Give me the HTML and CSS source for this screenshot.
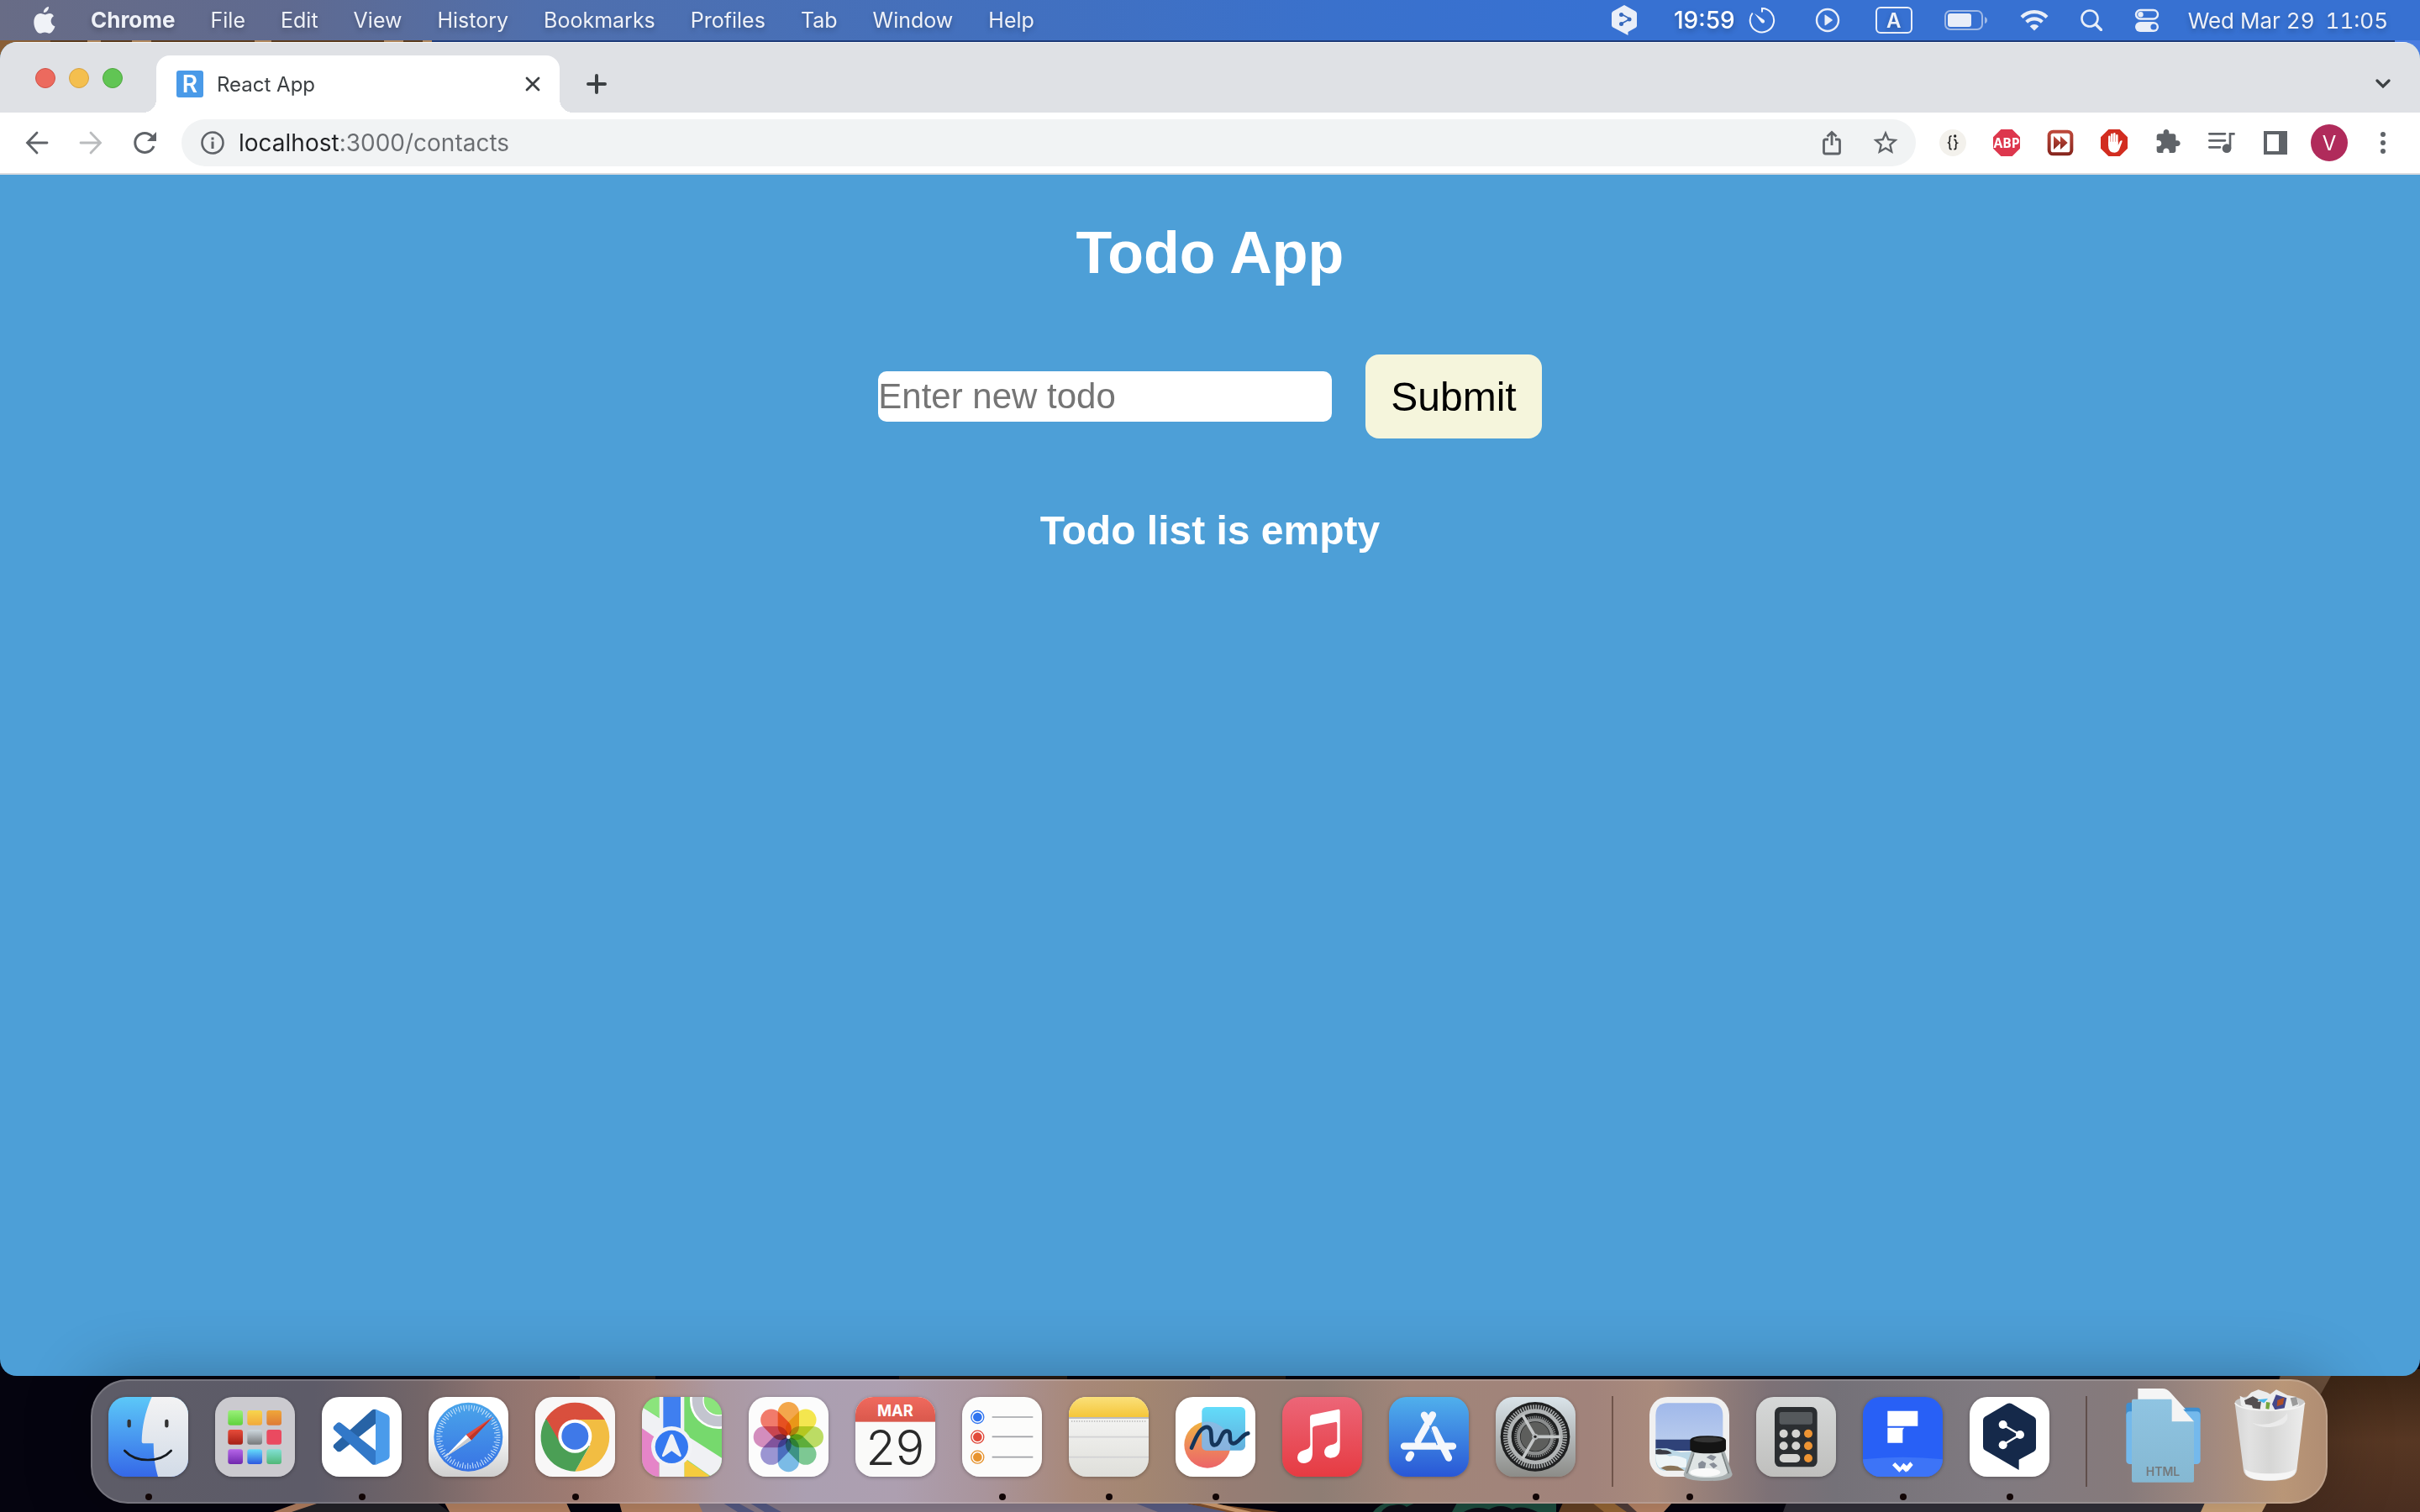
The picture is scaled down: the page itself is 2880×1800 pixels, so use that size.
FILE: index.html
```html
<!DOCTYPE html>
<html lang="en">
<head>
<meta charset="utf-8">
<meta name="viewport" content="width=device-width, initial-scale=1">
<title>React App</title>
<link rel="stylesheet" href="styles.css">
</head>
<body>
<svg class="wallpaper" viewBox="0 0 2880 1800" preserveAspectRatio="none" aria-hidden="true">
  <defs>
    <linearGradient id="wall-brown" x1="0" y1="0" x2="0" y2="1"><stop offset="0" stop-color="#3a2414"/><stop offset=".5" stop-color="#573723"/><stop offset="1" stop-color="#4a2e20"/></linearGradient>
  </defs>
  <rect width="2880" height="1800" fill="#05040f"/>
  <rect width="514" height="100" fill="#5a3a1c"/>
  <rect width="60" height="100" fill="#8a5f36"/>
  <path d="M104 48h16v3h-16zM157 48h23v3h-23zM303 48h20v3h-20zM457 48h23v3h-23zM503 48h11v3h-11z" fill="#b0875c"/>
  <rect x="514" width="2340" height="100" fill="#1d3a78"/>
  <rect x="2850" width="30" height="100" fill="#4a7ce0"/>
  <path d="M690 1638h90v5h-90zM1070 1638h200v5h-200zM1440 1638h90v5h-90z" fill="#2a1b12"/>
  <path d="M380 1789H520L535 1800H325z" fill="#25242a"/>
  <path d="M355 1789h25l-33 11h-22z" fill="#bd8666"/>
  <path d="M529 1789H836V1800H535z" fill="#c08a68"/>
  <path d="M674 1789h63l3 11h-61z" fill="#05040f"/>
  <path d="M831 1789h560v11H836z" fill="#8f8191"/>
  <path d="M860 1789h18l20 11h-20zM892 1789h18l20 11h-20z" fill="#5a5f8c"/>
  <path d="M1350 1789h58l60 11h-90z" fill="#5f638c"/>
  <path d="M1408 1789h24l90 11h-62z" fill="#8a5630"/>
  <path d="M1424 1789h20l46 11h-20z" fill="#e0a878"/>
  <path d="M1634 1800q8-10 18-11h200v11z" fill="#1f5243"/>
  <path d="M1644 1800q6-8 14-8 10-3 16 2 10-6 20-5h40l-6 11zM1742 1800q14-8 30-3 14-8 28 0 10-6 30 3z" fill="#0d0d17"/>
  <path d="M1860 1789h50l20 11h-75z" fill="#6b4526"/>
  <path d="M1895 1789h50l12 11h-48z" fill="#a06d38"/>
  <path d="M1920 1789h30l10 11h-24z" fill="#55403c"/>
  <path d="M1936 1789h54l-10 11h-32z" fill="#c38c6c"/>
  <path d="M2126 1789h500v11H2122z" fill="#34323c"/>
  <path d="M2714 1630H2880V1800H2690z" fill="url(#wall-brown)"/>
  <path d="M2714 1638h60l-50 90h-40z" fill="#6b503c"/>
  <path d="M2624 1789h74l-6 11h-73z" fill="#d9ae80"/>
</svg>

<header class="menubar">
  <nav class="menus" aria-label="Menu bar">
    <button class="menu" type="button" aria-label="Apple menu"><svg class="apple" viewBox="0 0 26 32"><path d="M18 0c.3 3.600-2.800 7.200-6.100 7C11.500 3.700 14.700.4 18 0zM23.900 11.300c-5 3.200-4 10.100 1.600 12.300-1.700 4.500-4.300 8.200-6.800 8.200-2.100 0-2.900-1.200-5.400-1.200s-3.300 1.200-5.200 1.200C3.800 31.800.3 24.700.3 18.400c0-6.300 3.700-10.300 7.900-10.300 2.300 0 3.800 1.300 5.300 1.300 1.400 0 3.100-1.400 5.800-1.400 1.900 0 3.600 1 4.600 3.300z"/></svg></button>
    <button class="menu menu-app" type="button">Chrome</button>
    <button class="menu" type="button">File</button>
    <button class="menu" type="button">Edit</button>
    <button class="menu" type="button">View</button>
    <button class="menu" type="button">History</button>
    <button class="menu" type="button">Bookmarks</button>
    <button class="menu" type="button">Profiles</button>
    <button class="menu" type="button">Tab</button>
    <button class="menu" type="button">Window</button>
    <button class="menu" type="button">Help</button>
  </nav>
  <div class="status">
    <svg viewBox="0 0 30 36" width="30" height="36"><path d="M15 0l13.500 7.500q1.500 1 1.500 2.500v14.500q0 1.500-1.500 2.500L19.500 32v4L1.500 26.500Q0 25.500 0 24V10q0-1.500 1.500-2.500z" fill="#e9eef8"/><path d="M12 11l10 5.500L12 22" fill="none" stroke="#3568bd" stroke-width="1.500"/><g fill="#3568bd"><circle cx="11.500" cy="11.500" r="2.500"/><circle cx="21" cy="17" r="2.500"/><circle cx="11.500" cy="22.500" r="2.500"/></g></svg>
    <span class="timer"><span class="timer-text">19:59</span>
      <svg viewBox="0 0 32 32" width="32" height="32"><path d="M16 6.500V2a14.200 14.200 0 1 1-11.300 5.500" fill="none" stroke="#f2f5fc" stroke-width="2"/><path d="M7 8l11 7.500a2.200 2.200 0 1 1-3 3z" fill="#f2f5fc"/></svg></span>
    <svg class="playback" viewBox="0 0 30 30" width="30" height="30"><circle cx="15" cy="15" r="13" fill="none" stroke="#e9eef8" stroke-width="2.400"/><path d="M11.500 9.200q0-1 1-.500l8 5.500q.8.700 0 1.400l-8 5.600q-1 .5-1-.5z" fill="#e9eef8"/></svg>
    <span class="keyboard-layout">A</span>
    <svg viewBox="0 0 52 24" width="52" height="24"><rect x="1" y="1" width="44" height="22" rx="6" fill="none" stroke="#9fb9e6" stroke-width="2"/><rect x="4" y="4" width="28" height="16" rx="3" fill="#e9eef8"/><path d="M48 8q3 1 3 4t-3 4z" fill="#9fb9e6"/></svg>
    <svg viewBox="0 0 34 26" width="34" height="26"><path d="M2 9.500a21 21 0 0 1 30 0M7.700 15.200a13 13 0 0 1 18.600 0" fill="none" stroke="#e9eef8" stroke-width="4.200"/><path d="M17 25.500l-5.300-5.300a7.500 7.500 0 0 1 10.600 0z" fill="#e9eef8"/></svg>
    <svg viewBox="0 0 26 26" width="26" height="26"><circle cx="11" cy="11" r="9.500" fill="none" stroke="#e9eef8" stroke-width="2.600"/><path d="M18 18l6.500 6.500" stroke="#e9eef8" stroke-width="3.400" stroke-linecap="round"/></svg>
    <svg viewBox="0 0 30 28" width="30" height="28"><rect x="2" y="2" width="26" height="10.500" rx="5.250" fill="none" stroke="#e9eef8" stroke-width="2.400"/><circle cx="7.500" cy="7.200" r="3.200" fill="#e9eef8"/><rect x="1" y="16" width="28" height="12" rx="6" fill="#e9eef8"/><circle cx="23" cy="22" r="3.600" fill="#3771d2"/></svg>
    <span class="clock"><span>Wed Mar 29</span><span>11:05</span></span>
  </div>
</header>

<main class="window">
  <div class="tabstrip">
    <div class="lights">
      <button class="light light-close" type="button" aria-label="Close window"></button>
      <button class="light light-minimize" type="button" aria-label="Minimize window"></button>
      <button class="light light-zoom" type="button" aria-label="Zoom window"></button>
    </div>
    <div class="tab">
      <span class="favicon">R</span>
      <span class="tab-title">React App</span>
      <button class="plain" type="button" aria-label="Close tab"><svg viewBox="0 0 18 18" width="18" height="18"><path d="M2 2l14 14M16 2L2 16" stroke="#3c4043" stroke-width="2.800" stroke-linecap="round"/></svg></button>
    </div>
    <button class="plain new-tab" type="button" aria-label="New tab"><svg viewBox="0 0 24 24" width="24" height="24"><path d="M12 2v20M2 12h20" stroke="#3c4043" stroke-width="4" stroke-linecap="round"/></svg></button>
    <button class="plain tab-search" type="button" aria-label="Search tabs"><svg viewBox="0 0 18 12" width="18" height="12"><path d="M2 2l7 7 7-7" fill="none" stroke="#3c4043" stroke-width="3.200" stroke-linecap="round"/></svg></button>
  </div>

  <div class="toolbar">
    <button class="plain" type="button" aria-label="Back"><svg viewBox="0 0 32 32" width="32" height="32"><path d="M28 16H5M16 4L4.500 16 16 28" fill="none" stroke="#5f6368" stroke-width="2.800" stroke-linecap="round"/></svg></button>
    <button class="plain" type="button" aria-label="Forward"><svg viewBox="0 0 32 32" width="32" height="32"><path d="M4 16h23M16 4l11.500 12L16 28" fill="none" stroke="#babcbe" stroke-width="2.800" stroke-linecap="round"/></svg></button>
    <button class="plain" type="button" aria-label="Reload"><svg viewBox="0 0 32 32" width="32" height="32"><path d="M27 20a11.500 11.500 0 1 1-2-11.500" fill="none" stroke="#5f6368" stroke-width="3"/><path d="M30 3v11H19z" fill="#5f6368"/></svg></button>
    <div class="omnibox">
      <svg viewBox="0 0 28 28" width="28" height="28"><circle cx="14" cy="14" r="12.500" fill="none" stroke="#5f6368" stroke-width="2.600"/><path d="M12.500 12.500h3V21h-3zM12.500 7.500h3v3h-3z" fill="#5f6368"/></svg>
      <input class="url" type="text" value="localhost:3000/contacts" aria-label="Address">
      <button class="plain" type="button" aria-label="Share"><svg viewBox="0 0 32 32" width="32" height="32"><path d="M12 12H8.500Q6.500 12 6.500 14v13q0 2 2 2h15q2 0 2-2V14q0-2-2-2H20M16 19V4M10.500 8.500L16 3.500l5.500 5" fill="none" stroke="#5f6368" stroke-width="2.800"/></svg></button>
      <button class="plain" type="button" aria-label="Bookmark this tab"><svg viewBox="1 1 22 22" width="32" height="32"><path fill="#5f6368" d="M22 9.240l-7.190-.62L12 2 9.190 8.630 2 9.240l5.460 4.730L5.820 21 12 17.270 18.180 21l-1.630-7.030L22 9.240zM12 15.400l-3.760 2.270 1-4.280-3.320-2.880 4.380-.38L12 6.100l1.710 4.040 4.380.38-3.320 2.880 1 4.280L12 15.400z"/></svg></button>
    </div>
    <button class="plain" type="button" aria-label="JSON formatter"><svg viewBox="0 0 96 96" width="32" height="32"><circle cx="48" cy="48" r="48" fill="#f3f1ec"/><path d="M44 24h-2q-5 0-5 5v11q0 6-4 8 4 2 4 8v10q0 5 5 5h2" fill="none" stroke="#222" stroke-width="5"/><circle cx="56" cy="24" r="5" fill="#222"/><path d="M52 37h2q5 0 5 5v2q0 4 4 5-4 2-4 6v11q0 5-5 5h-2" fill="none" stroke="#222" stroke-width="5"/></svg></button>
    <button class="plain" type="button" aria-label="Adblock Plus"><svg viewBox="0 0 96 96" width="32" height="32"><path d="M28 0h40l28 28v40L68 96H28L0 68V28z" fill="#dd374d"/><text class="abp" x="48" y="65" text-anchor="middle">ABP</text></svg></button>
    <button class="plain" type="button" aria-label="Video speed"><svg viewBox="0 0 96 96" width="32" height="32"><defs><linearGradient id="speed" x2="0" y2="1"><stop stop-color="#c04a3c"/><stop offset="1" stop-color="#84241c"/></linearGradient></defs><rect x="2" y="2" width="92" height="92" rx="20" fill="url(#speed)"/><rect x="14" y="14" width="68" height="68" rx="8" fill="#fff"/><path d="M24 24l26 24-26 24zM48 24l26 24-26 24z" fill="url(#speed)"/></svg></button>
    <button class="plain" type="button" aria-label="AdBlock"><svg viewBox="0 0 96 96" width="32" height="32"><path d="M28 0h40l28 28v40L68 96H28L0 68V28z" fill="#d22d20"/><path d="M31 26v30M40 18v34M49 16v34M58 22v32" stroke="#fff" stroke-width="7.500" stroke-linecap="round"/><path d="M27 44h35v14l6-14q3-6 8-4 2 2 0 6l-9 24q-5 13-17 13-23 0-23-27z" fill="#fff"/></svg></button>
    <button class="plain" type="button" aria-label="Extensions"><svg viewBox="0 1 24 24" width="32" height="32"><path fill="#5f6368" d="M20.500 11H19V7c0-1.100-.9-2-2-2h-4V3.500C13 2.120 11.880 1 10.500 1S8 2.120 8 3.500V5H4c-1.100 0-1.990.9-1.990 2v3.800H3.500c1.490 0 2.700 1.210 2.700 2.700s-1.210 2.700-2.700 2.700H2V20c0 1.100.9 2 2 2h3.800v-1.500c0-1.490 1.210-2.700 2.700-2.700 1.490 0 2.700 1.210 2.700 2.700V22H17c1.100 0 2-.9 2-2v-4h1.500c1.380 0 2.500-1.120 2.500-2.500S21.880 11 20.500 11z"/></svg></button>
    <button class="plain" type="button" aria-label="Media control"><svg viewBox="0 0 96 96" width="32" height="32"><path d="M4 16h56M4 40h56M4 64h38" stroke="#5f6368" stroke-width="8" stroke-linecap="round"/><circle cx="66" cy="68" r="16" fill="#5f6368"/><path d="M74 68V12H95v8H82v48z" fill="#5f6368"/></svg></button>
    <button class="plain" type="button" aria-label="Side panel"><svg viewBox="0 0 32 32" width="32" height="32"><path d="M2 2h28v28H2zM6 6v20h14V6z" fill="#5f6368" fill-rule="evenodd"/></svg></button>
    <button class="plain avatar" type="button">V</button>
    <button class="plain" type="button" aria-label="Chrome menu"><svg viewBox="0 0 32 32" width="32" height="32"><g fill="#5f6368"><circle cx="16" cy="6" r="3"/><circle cx="16" cy="16" r="3"/><circle cx="16" cy="26" r="3"/></g></svg></button>
  </div>

  <section class="page">
    <h1 class="title">Todo App</h1>
    <form class="todo-form">
      <input class="todo-input" type="text" placeholder="Enter new todo" aria-label="New todo">
      <button class="todo-submit" type="button">Submit</button>
    </form>
    <h2 class="empty">Todo list is empty</h2>
  </section>
</main>

<footer class="dock-area">
<ul class="dock">
  <li class="app running"><svg class="icon" viewBox="390 160 285 285"><defs><linearGradient id="f1" x2="0" y2="1"><stop stop-color="#5cc8f8"/><stop offset="1" stop-color="#3568e8"/></linearGradient><linearGradient id="f2" x2="0" y2="1"><stop stop-color="#f3f3f4"/><stop offset="1" stop-color="#d2dbe7"/></linearGradient></defs><rect x="390" y="160" width="285" height="285" fill="url(#f1)"/><path d="M545 160C520 215 510 270 509 318q0 8 8 8h34c0 44 5 84 16 119h108V160z" fill="url(#f2)"/><path d="M464 247v16M598 247v16" stroke="#333" stroke-width="13" stroke-linecap="round"/><path d="M448 352c40 44 126 44 166 0" fill="none" stroke="#151a20" stroke-width="8" stroke-linecap="round"/></svg></li>
  <li class="app"><svg class="icon" viewBox="774 160 285 285"><defs><linearGradient id="l1" x2="0" y2="1"><stop stop-color="#9af07a"/><stop offset="1" stop-color="#5fd23c"/></linearGradient><linearGradient id="l2" x2="0" y2="1"><stop stop-color="#f7d54d"/><stop offset="1" stop-color="#f2a93a"/></linearGradient><linearGradient id="l3" x2="0" y2="1"><stop stop-color="#efa63a"/><stop offset="1" stop-color="#de7a35"/></linearGradient><linearGradient id="l4" x2="0" y2="1"><stop stop-color="#e74c3a"/><stop offset="1" stop-color="#a51e16"/></linearGradient><linearGradient id="l5" x2="0" y2="1"><stop stop-color="#ced8de"/><stop offset="1" stop-color="#76787a"/></linearGradient><linearGradient id="l7" x2="0" y2="1"><stop stop-color="#b565e8"/><stop offset="1" stop-color="#7028ad"/></linearGradient><linearGradient id="l8" x2="0" y2="1"><stop stop-color="#64dcfa"/><stop offset="1" stop-color="#2c58e0"/></linearGradient><linearGradient id="l9" x2="0" y2="1"><stop stop-color="#82e0d4"/><stop offset="1" stop-color="#50b878"/></linearGradient></defs><rect x="774" y="160" width="285" height="285" fill="#cbcacf"/><rect x="820" y="208" width="53" height="53" rx="9" fill="url(#l1)"/><rect x="889" y="208" width="53" height="53" rx="9" fill="url(#l2)"/><rect x="958" y="208" width="53" height="53" rx="9" fill="url(#l3)"/><rect x="820" y="277" width="53" height="53" rx="9" fill="url(#l4)"/><rect x="889" y="277" width="53" height="53" rx="9" fill="url(#l5)"/><rect x="958" y="277" width="53" height="53" rx="9" fill="#ea4a60"/><rect x="820" y="347" width="53" height="53" rx="9" fill="url(#l7)"/><rect x="889" y="347" width="53" height="53" rx="9" fill="url(#l8)"/><rect x="958" y="347" width="53" height="53" rx="9" fill="url(#l9)"/></svg></li>
  <li class="app running"><svg class="icon" viewBox="1150 160 285 285"><rect x="1150" y="160" width="285" height="285" fill="#fff"/><path d="M1193 330q-5 8 2 14l10 10q6 4 13 0l124-98v-50q-6-4-14 2z" fill="#2763a6"/><path d="M1193 277q-5-8 2-14l10-10q6-4 13 0l124 98v50q-6 4-14-2z" fill="#3278c8"/><path d="M1340 203l44 20q8 4 8 12v137q0 8-8 12l-44 20q4-4 2-12V215q2-8-2-12z" fill="#4a9bea"/></svg></li>
  <li class="app"><svg class="icon" viewBox="65 160 285 285"><defs><linearGradient id="s1" x2="0" y2="1"><stop offset=".4" stop-color="#fff"/><stop offset="1" stop-color="#cfcfcf"/></linearGradient><linearGradient id="s2" x2="0" y2="1"><stop stop-color="#4aa5ea"/><stop offset="1" stop-color="#3873e4"/></linearGradient></defs><rect x="65" y="160" width="285" height="285" fill="url(#s1)"/><circle cx="207" cy="303" r="123" fill="url(#s2)"/><circle cx="207" cy="303" r="107" fill="none" stroke="#cfe6fb" stroke-width="14" stroke-dasharray="3 6.340"/><circle cx="207" cy="303" r="97" fill="none" stroke="#cfe6fb" stroke-width="8" stroke-dasharray="3 13.930"/><path d="M295 231l-78 84-18-20z" fill="#e24a3c"/><path d="M295 231l-78 84-9-10z" fill="#bb3529"/><path d="M122 376l77-81 18 20z" fill="#fff"/><path d="M122 376l86-71 9 10z" fill="#c9ccd0"/></svg></li>
  <li class="app running"><svg class="icon" viewBox="443 160 285 285"><rect x="443" y="160" width="285" height="285" fill="#f8f7f7"/><path d="M585 303L478.500 241.500A123 123 0 0 1 691.500 241.500z" fill="#d94f3d"/><path d="M691 241A123 123 0 0 1 585 426L640 330 600 241z" fill="#f2bd42"/><path d="M482 237A123 123 0 0 0 585 426L637 334 540 330z" fill="#4b9f55"/><path d="M482 237L535 330 560 255V241H691L680 230z" fill="#d94f3d"/><circle cx="585" cy="300" r="60" fill="#fff"/><circle cx="585" cy="300" r="48" fill="#3f79e8"/></svg></li>
  <li class="app"><svg class="icon" viewBox="822 160 285 285"><rect x="822" y="160" width="285" height="285" fill="#76d96d"/><path d="M822 195l62 38V160h-62z" fill="#8be47c"/><path d="M822 270l62 42v133h-62z" fill="#e585c8"/><path d="M973 380l95 65h-95z" fill="#f5cb3e"/><path d="M822 196l285 182v67h-37L822 272z" fill="#f0f1f4"/><path d="M884 160h89v285h-89z" fill="#f0f1f4"/><path d="M898 160h62v140h-62z" fill="#3f7ff0"/><circle cx="1095" cy="172" r="77" fill="#8be47c" stroke="#fff" stroke-width="50"/><circle cx="1095" cy="172" r="75" fill="none" stroke="#c3c5cf" stroke-width="38"/><circle cx="928" cy="338" r="73" fill="#f2f3f6"/><circle cx="928" cy="338" r="59" fill="#3478f0"/><path d="M928 293q5 0 8 9l26 66q2 8-6 5l-28-20-28 20q-8 3-6-5l26-66q3-9 8-9z" fill="#eef1f6"/></svg></li>
  <li class="app"><svg class="icon" viewBox="1205 160 285 285"><rect x="1205" y="160" width="285" height="285" fill="#fcfcfc"/><g class="petals"><rect x="1309" y="178" width="76" height="124" rx="38" fill="#f2a03c"/><rect x="1309" y="178" width="76" height="124" rx="38" fill="#f4e440" transform="rotate(45 1347 303)"/><rect x="1309" y="178" width="76" height="124" rx="38" fill="#b7d957" transform="rotate(90 1347 303)"/><rect x="1309" y="178" width="76" height="124" rx="38" fill="#72c48a" transform="rotate(135 1347 303)"/><rect x="1309" y="178" width="76" height="124" rx="38" fill="#70b5e4" transform="rotate(180 1347 303)"/><rect x="1309" y="178" width="76" height="124" rx="38" fill="#938cce" transform="rotate(225 1347 303)"/><rect x="1309" y="178" width="76" height="124" rx="38" fill="#cf83b8" transform="rotate(270 1347 303)"/><rect x="1309" y="178" width="76" height="124" rx="38" fill="#f0705e" transform="rotate(315 1347 303)"/></g><circle cx="1347" cy="303" r="7" fill="#eee"/></svg></li>
  <li class="app"><svg class="icon" viewBox="113 160 285 285"><defs><linearGradient id="c1" x2="0" y2="1"><stop stop-color="#f06a5e"/><stop offset="1" stop-color="#d9584c"/></linearGradient></defs><rect x="113" y="160" width="285" height="285" fill="#fafaf9"/><rect x="113" y="160" width="285" height="89" fill="url(#c1)"/><text class="cal-month" x="255" y="229" text-anchor="middle">MAR</text><text class="cal-day" x="255" y="402" text-anchor="middle">29</text></svg></li>
  <li class="app running"><svg class="icon" viewBox="497 160 285 285"><rect x="497" y="160" width="285" height="285" fill="#fcfcfb"/><g fill="#fff" stroke-width="4"><circle cx="552" cy="232" r="22.500" stroke="#3478f0"/><circle cx="552" cy="303" r="22.500" stroke="#e0483a"/><circle cx="552" cy="375" r="22.500" stroke="#e5932e"/></g><circle cx="552" cy="232" r="16" fill="#2f74f0"/><circle cx="552" cy="303" r="16" fill="#e24a3a"/><circle cx="552" cy="375" r="16" fill="#e8942e"/><path d="M604 232h146M604 302h146M604 375h146" stroke="#a0a1a6" stroke-width="5"/></svg></li>
  <li class="app running"><svg class="icon" viewBox="875 160 285 285"><defs><linearGradient id="n1" x2="0" y2="1"><stop stop-color="#fae07a"/><stop offset="1" stop-color="#f5c63a"/></linearGradient><linearGradient id="n2" x2="0" y2="1"><stop stop-color="#fafafa"/><stop offset="1" stop-color="#dfdfda"/></linearGradient></defs><rect x="875" y="160" width="285" height="285" fill="url(#n2)"/><rect x="875" y="160" width="285" height="72" fill="url(#n1)"/><path d="M875 235h285" stroke="#a9a9ae" stroke-width="5"/><path d="M884 247h270" stroke="#b5b5b5" stroke-width="5" stroke-dasharray="4 5"/><path d="M875 303h285M875 375h285" stroke="#d2d2d4" stroke-width="5"/></svg></li>
  <li class="app running"><svg class="icon" viewBox="1253 160 285 285"><defs><linearGradient id="w1" x2="0" y2="1"><stop stop-color="#f0b43e"/><stop offset=".5" stop-color="#ee8a5a"/><stop offset="1" stop-color="#ec6468"/></linearGradient><linearGradient id="w2" x2="0" y2="1"><stop stop-color="#62dcfa"/><stop offset="1" stop-color="#62aedc"/></linearGradient></defs><rect x="1253" y="160" width="285" height="285" fill="#fff"/><circle cx="1367" cy="331" r="83" fill="url(#w1)"/><rect x="1347" y="196" width="155" height="155" rx="16" fill="url(#w2)"/><path d="M1347 251a83 83 0 0 1 100 100H1363q-16 0-16-16z" fill="#98b4de" opacity=".7"/><path d="M1310 342c14-34 28-68 50-74 36-6 8 64 32 64 24 0 20-50 44-50 24 0-2 46 26 44 20-4 26-32 50-36" fill="none" stroke="#15355a" stroke-width="14" stroke-linecap="round"/></svg></li>
  <li class="app"><svg class="icon" viewBox="168 160 285 285"><defs><linearGradient id="m1" x2="0" y2="1"><stop stop-color="#ec6678"/><stop offset="1" stop-color="#e63b42"/></linearGradient></defs><rect x="168" y="160" width="285" height="285" fill="url(#m1)"/><path d="M267 232q0-6 7-8l92-19q8-2 8 6v130q0 36-34 37-20-1-22-20 1-21 22-26 24-4 24-17V256q0-8-7-6l-73 14q-8 2-8 8v88q0 35-32 37-21-1-22-20 0-20 21-26 25-5 25-20z" fill="#fff"/></svg></li>
  <li class="app"><svg class="icon" viewBox="546 160 285 285"><defs><linearGradient id="a1" x2="0" y2="1"><stop stop-color="#50b0ec"/><stop offset="1" stop-color="#2957d6"/></linearGradient></defs><rect x="546" y="160" width="285" height="285" fill="url(#a1)"/><g fill="none" stroke="#f4f7fc" stroke-width="25" stroke-linecap="round"><path d="M672 225l10 17M702 224l-52 92M600 336h174M624 366l-7 12M708 277l51 101"/></g><path d="M692 262l26 70" stroke="#3f84e4" stroke-width="4"/></svg></li>
  <li class="app running"><svg class="icon" viewBox="930 160 285 285"><defs><linearGradient id="g1" x2="0" y2="1"><stop stop-color="#dae4ea"/><stop offset="1" stop-color="#8c8c88"/></linearGradient></defs><rect x="930" y="160" width="285" height="285" fill="url(#g1)"/><circle cx="1071" cy="302" r="124" fill="#1f2021"/><g fill="none"><circle cx="1071" cy="302" r="106" stroke="#a7aaab" stroke-width="16" stroke-dasharray="5 4.250"/><circle cx="1071" cy="302" r="92" stroke="#b1b4b5" stroke-width="14"/><circle cx="1071" cy="302" r="70" stroke="#858787" stroke-width="9" stroke-dasharray="4 3.330"/><circle cx="1071" cy="302" r="60" stroke="#8b8d8d" stroke-width="12"/></g><circle cx="1071" cy="302" r="52" fill="#5d5e5c"/><path d="M1071 302h90M1071 302l-45-78M1071 302l-45 78" stroke="#c4c7c8" stroke-width="11"/><circle cx="1071" cy="302" r="11" fill="#b5b8b9"/><circle cx="1071" cy="302" r="5" fill="#222"/></svg></li>
  <li class="separator" role="separator"></li>
  <li class="app running"><svg class="icon icon-free" viewBox="131 160 285 285"><defs><linearGradient id="p1" x2="0" y2="1"><stop stop-color="#a0b8ea"/><stop offset="1" stop-color="#b8cbed"/></linearGradient></defs><rect x="131" y="160" width="285" height="285" rx="64" fill="#f0f0f0"/><path d="M153 314V226q0-44 44-44h152q44 0 44 44v88z" fill="url(#p1)"/><path d="M153 312h240v40H153z" fill="#2f4278"/><path d="M153 344l40 0 50 14 150-10v70q-10 5-30 5H180q-27-6-27-40z" fill="#bcd8e6"/><path d="M153 366q30-8 50 6 25-6 60 10v30H165q-12-14-12-46z" fill="#eef5f7"/><path d="M153 350q15-6 24 0 22-2 34 12-30 6-58 2z" fill="#3a3a44"/><path d="M172 414q20-14 60-6l25 15h-65z" fill="#8a7458"/><path d="M280 356l-27 80q0 24 86 24t88-24l-27-80z" fill="#a9b0b1"/><path d="M292 358l-22 72q10 18 70 18t70-18l-24-72z" fill="#dfe4e4"/><ellipse cx="330" cy="429" rx="54" ry="15" fill="#fafafa"/><path d="M305 398l14-10 14 8-4 18-22 2zM334 376l16-10 20 8-12 14zM344 400l16-6 14 12-14 10z" fill="#888e98"/><path d="M290 362l-26 72M390 362l24 72" stroke="#777f80" stroke-width="4"/><path d="M276 316q0-17 64-17t64 17v30q0 16-64 16t-64-16z" fill="#141414"/><ellipse cx="340" cy="313" rx="52" ry="10" fill="#343434"/></svg></li>
  <li class="app"><svg class="icon" viewBox="509 160 285 285"><defs><linearGradient id="k1" x2="0" y2="1"><stop stop-color="#d6d8d8"/><stop offset="1" stop-color="#bfbfbd"/></linearGradient></defs><rect x="509" y="160" width="285" height="285" fill="url(#k1)"/><rect x="575" y="196" width="152" height="214" rx="20" fill="#2b2e31"/><rect x="592" y="214" width="118" height="44" rx="7" fill="#55595c"/><g fill="#d4d4d2"><circle cx="607" cy="291" r="15"/><circle cx="651" cy="291" r="15"/><circle cx="607" cy="335" r="15"/><circle cx="651" cy="335" r="15"/><rect x="592" y="364" width="74" height="30" rx="15"/></g><g fill="#ee9433"><circle cx="695" cy="291" r="15"/><circle cx="695" cy="335" r="15"/><circle cx="695" cy="379" r="15"/></g></svg></li>
  <li class="app running"><svg class="icon" viewBox="887 160 285 285"><rect x="887" y="160" width="285" height="285" fill="#2860f6"/><path d="M887 383q142-16 285 0v62H887z" fill="#3d74f7"/><path d="M975 210h108v54H975zM975 270h60q-6 4-6 10v44h-54z" fill="#fff"/><path d="M1002 394l18 18 12-16 18 16-9 17-12-12-12 12-25-25zM1056 392l10 11-20 24-10-12z" fill="#fff"/></svg></li>
  <li class="app running"><svg class="icon" viewBox="1270 160 285 285"><rect x="1270" y="160" width="285" height="285" fill="#fff"/><path d="M1403 185q9-5 18 0l79 46q7 4 7 12v100q0 8-7 12l-54 29v37l-122-71q-6-4-6-12V243q0-8 6-12z" fill="#15294a"/><path d="M1388 259l62 36-62 37" fill="none" stroke="#fff" stroke-width="7"/><g fill="#fff"><circle cx="1389" cy="259" r="15"/><circle cx="1450" cy="295" r="15"/><circle cx="1389" cy="332" r="15"/></g></svg></li>
  <li class="separator" role="separator"></li>
  <li class="app"><svg class="icon icon-free" viewBox="443 160 285 285"><defs><linearGradient id="h1g" x2="0" y2="1"><stop stop-color="#8fc4e2"/><stop offset="1" stop-color="#85b8d2"/></linearGradient></defs><path d="M453 192q0-12 12-12h50l14 18h177q12 0 12 12v40H453z" fill="#3f8fd0"/><rect x="453" y="212" width="265" height="188" rx="13" fill="#74b9ec"/><path d="M495 130h88q16 0 28 14l54 60h-170z" fill="#f5f5f5"/><path d="M473 174q0-6 6-6h137l79 80v211q0 6-6 6H479q-6 0-6-6z" fill="url(#h1g)"/><path d="M608 146q8 14 8 30v72h79q-40-44-87-102z" fill="#f4f4f4"/><text class="file-kind" x="584" y="441" text-anchor="middle">HTML</text></svg></li>
  <li class="app"><svg class="icon icon-free" viewBox="821 160 285 285"><defs><linearGradient id="t1"><stop stop-color="#d5d5d5"/><stop offset=".2" stop-color="#e2e2e2"/><stop offset=".5" stop-color="#d6d6d5"/><stop offset="1" stop-color="#ededed"/></linearGradient></defs><ellipse cx="963" cy="180" rx="125" ry="28" fill="#c9c9c9"/><path d="M856 156l20 10 20-22 26-10 32 10 10 6 22-16 40 20 32 6 10 30-40 20H890l-30-20z" fill="#eceded"/><path d="M872 172l30-14 22 12-14 22-34-6zM896 182l36-6-4 28-26-4z" fill="#544f50"/><path d="M985 152l38 12-8 36-34 6-10-20z" fill="#44488a"/><path d="M990 172l24-10-4 24-22 8z" fill="#b05028"/><path d="M918 170l38-4-14 16z" fill="#48b8ec"/><path d="M950 178l14 2-4 24-12-2z" fill="#74a63e"/><path d="M1036 164l22-4 6 26-20 8z" fill="#9a9a9a"/><path d="M838 182q20 26 125 26t125-26l-29 240q-6 38-96 38t-94-38z" fill="url(#t1)"/><path d="M838 182q20 26 125 26t125-26" fill="none" stroke="#f4f4f4" stroke-width="5"/><path d="M900 252q40 14 80-2 36-14 44-32 14 44-60 50-40 2-64-16z" fill="#ebebeb"/><path d="M874 418q20 16 88 16t92-16l-2 12q-10 28-90 28t-86-28z" fill="#f5f5f5"/></svg></li>
</ul>
</footer>
</body>
</html>
```
FILE: styles.css
```css
* { box-sizing: border-box; }

body {
  margin: 0;
  min-height: 100vh;
  display: flex;
  flex-direction: column;
  position: relative;
  overflow: hidden;
  font-family: Inter, "Liberation Sans", sans-serif;
  background: #05040f;
}

svg { display: block; flex: none; }

button { font: inherit; }

.wallpaper {
  position: absolute;
  inset: 0;
  width: 100%;
  height: 100%;
  z-index: -1;
}

/* Menu bar */
.menubar {
  height: 48px;
  margin-bottom: 2px;
  padding: 0 38px 0 19px;
  display: flex;
  align-items: center;
  justify-content: space-between;
  color: #eef1f8;
  font-size: 26px;
  background: linear-gradient(90deg, #686c86 0%, #5f6a90 12%, #506fac 22%, #4270bf 42%, #3a71cc 55%, #3771d2 66%);
  text-shadow: 0 3px 6px rgba(0, 0, 0, .25);
}

.menus { display: flex; align-items: center; }

.menu {
  border: 0;
  background: none;
  padding: 0 21px;
  color: inherit;
  font-size: 25px;
  line-height: 32px;
  text-shadow: inherit;
}

.menu-app { font-size: 26px; font-weight: 700; }

.apple { width: 26px; height: 32px; fill: #f0f2f7; }

.status { display: flex; align-items: center; gap: 38px; }

.timer { display: flex; align-items: center; gap: 16px; margin: 0 5px 0 6px; }

.timer-text { font-size: 28px; font-weight: 500; color: #fff; }

.playback { margin: 0 4px; }

.keyboard-layout {
  width: 44px;
  height: 32px;
  border: 2px solid #e9eef8;
  border-radius: 6px;
  text-align: center;
  font-size: 24px;
  font-weight: 600;
  line-height: 29px;
}

.clock { display: flex; gap: 13px; margin-left: -4px; font-variant-numeric: tabular-nums; }

/* Browser window */
.window {
  flex: 1;
  display: flex;
  flex-direction: column;
  border-radius: 20px;
  overflow: hidden;
  background: #4d9fd7;
}

.tabstrip {
  height: 84px;
  padding: 15px 35px 0 42px;
  display: flex;
  align-items: center;
  background: #dfe1e5;
  border-top: 1px solid #f3f4f6;
}

.lights { display: flex; gap: 16px; margin: 0 40px 14px 0; }

.light { width: 24px; height: 24px; padding: 0; border-radius: 50%; border: 1px solid; }
.light-close { background: #ec6a5e; border-color: #d05147; }
.light-minimize { background: #f4bf4f; border-color: #d6a243; }
.light-zoom { background: #61c554; border-color: #4fa73f; }

.tab {
  position: relative;
  width: 480px;
  height: 68px;
  padding: 0 23px 0 24px;
  display: flex;
  align-items: center;
  gap: 16px;
  background: #fff;
  border-radius: 16px 16px 0 0;
}

.tab::before,
.tab::after {
  content: "";
  position: absolute;
  bottom: 0;
  width: 16px;
  height: 16px;
}
.tab::before { right: 100%; background: radial-gradient(circle at 0 0, transparent 16px, #fff 16px); }
.tab::after { left: 100%; background: radial-gradient(circle at 100% 0, transparent 16px, #fff 16px); }

.favicon {
  width: 32px;
  height: 32px;
  border-radius: 3px;
  background: #4a9ae8;
  color: #fff;
  font-size: 28px;
  font-weight: 600;
  line-height: 32px;
  text-align: center;
}

.tab-title { flex: 1; font-size: 24px; color: #3c4043; }

.plain { border: 0; padding: 0; background: none; }

.new-tab { margin-left: 32px; }
.tab-search { margin-left: auto; }

.toolbar {
  height: 74px;
  padding: 8px 28px;
  display: flex;
  align-items: center;
  gap: 32px;
  background: #fff;
  border-bottom: 2px solid #dadce0;
}

.omnibox {
  flex: 1;
  height: 56px;
  margin: 0 -4px;
  padding: 0 20px 0 23px;
  display: flex;
  align-items: center;
  gap: 32px;
  border-radius: 28px;
  background: #f1f3f4;
}

.url {
  flex: 1;
  min-width: 0;
  height: 36px;
  margin-left: -15px;
  padding: 0;
  border: 0;
  font-family: inherit;
  font-size: 28px;
  color: transparent;
  background: linear-gradient(90deg, #202124 120px, #6a6d71 120px);
  -webkit-background-clip: text;
  background-clip: text;
}

.abp { font: 700 47px "Open Sans", sans-serif; fill: #fff; }

.avatar {
  width: 44px;
  height: 44px;
  margin: 0 -6px;
  border-radius: 50%;
  background: #b02b5b;
  color: #fff;
  font-size: 24px;
}

/* Todo page */
.page {
  flex: 1;
  padding: 52px 20px 0;
  display: flex;
  flex-direction: column;
  align-items: center;
  font-family: "Liberation Sans", Arial, sans-serif;
  color: #fff;
}

.title { margin: 0; font-size: 70px; line-height: 82px; }

.todo-form { display: flex; align-items: center; gap: 40px; margin: 80px 0; }

.todo-input {
  width: 540px;
  height: 60px;
  padding: 0;
  border: 0;
  border-radius: 10px;
  font-family: inherit;
  font-size: 42px;
  background: #fff;
}
.todo-input::placeholder { color: #757575; }

.todo-submit {
  height: 100px;
  padding: 0 30px;
  border: 0;
  border-radius: 16px;
  font-family: inherit;
  font-size: 48px;
  color: #000;
  background: beige;
}

.empty { margin: 0; font-size: 48px; line-height: 60px; }

/* Dock */
.dock-area {
  position: relative;
  padding: 4px 2px 10px 0;
  display: flex;
  justify-content: center;
}

.dock {
  margin: 0;
  padding: 19px 19px 2px;
  display: flex;
  gap: 32px;
  list-style: none;
  border: 2px solid rgba(255, 255, 255, .16);
  border-radius: 44px;
  background: linear-gradient(90deg, #5d5c67 0%, #5d5b68 10%, #746668 15%, #8e736f 18%, #a07c72 22%, #b08c82 25%, #ab98a1 28%, #ab9fb1 32%, #ad9fb0 36%, #a9949b 40%, #a88879 44%, #a38671 47%, #967d74 51%, #8e7d74 55%, #a18579 59%, #a1837b 67%, #a98a7c 70%, #7d7176 75%, #747178 78%, #807a80 85%, #867a7b 91%, #a38a7f 95%, #b99677 98%, #b08d73 100%);
  background-clip: border-box;
  background-origin: border-box;
  box-shadow: 0 0 80px rgba(0, 0, 0, .3);
}

.app { display: flex; flex-direction: column; gap: 20px; }

.app::after { content: ""; width: 8px; height: 8px; border-radius: 50%; align-self: center; }
.running::after { background: #120606; }

.icon {
  width: 95px;
  height: 95px;
  border-radius: 21px;
  box-shadow: 0 1px 4px rgba(0, 0, 0, .3);
}
.icon-free { overflow: visible; border-radius: 0; box-shadow: none; }

.petals { isolation: isolate; }
.petals rect { mix-blend-mode: multiply; opacity: .92; }

.cal-month { font: 700 55px Inter, sans-serif; fill: #fff; }
.cal-day { font: 300 172px Inter, sans-serif; fill: #2a2a2a; }
.file-kind { font: 600 42px Inter, sans-serif; fill: #74797c; }

.separator { width: 2px; height: 108px; margin: -1px 11px 0; background: rgba(60, 35, 25, .5); }
```
